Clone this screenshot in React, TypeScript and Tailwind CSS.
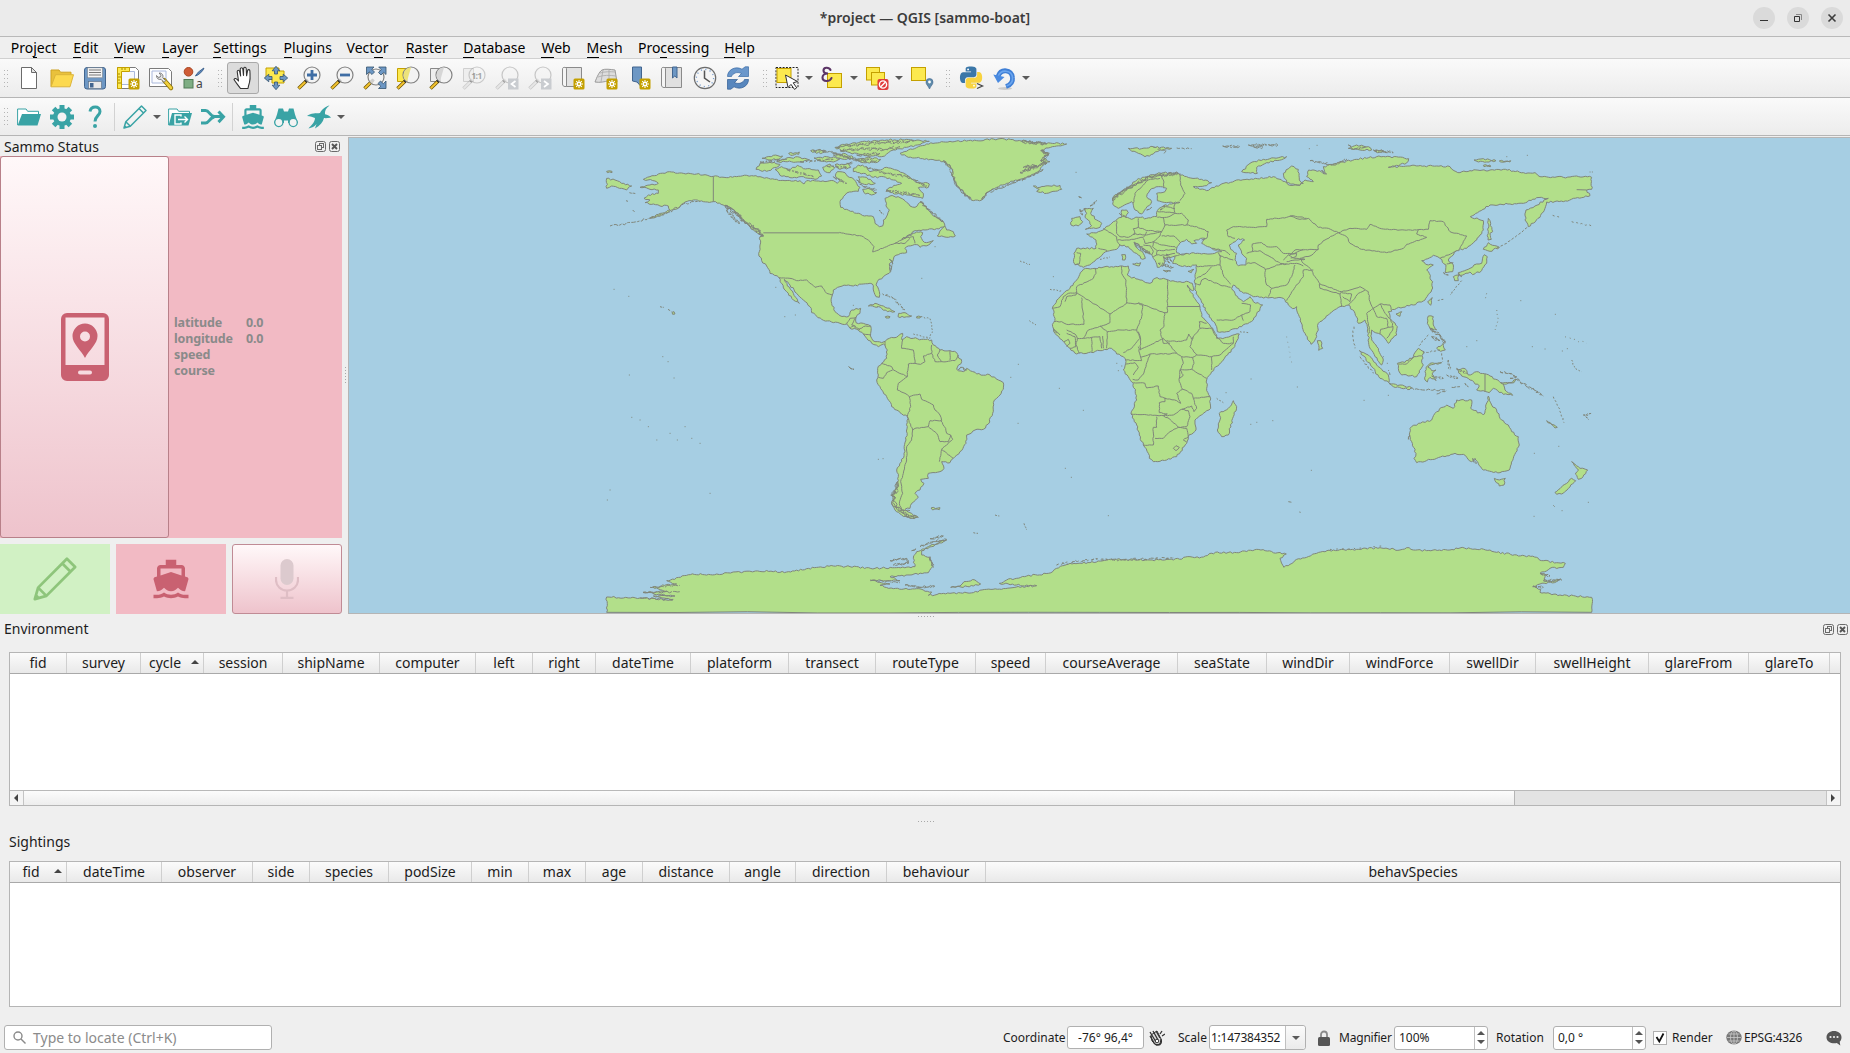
import React from "react";

/* ------------------------------------------------------------------ */
/* World map                                                           */
/* ------------------------------------------------------------------ */

type Part = [number, number, string];

const GREEN = "#b2df8a";
const LINE = "#80867a";

// Turns "x,y x,y ..." runs (each with its own origin) into one path and
// roughens long segments so that coastlines do not look straight.
function trace(parts: Part[], close = true, rough = 2.6, salt = 7): string {
  const pts: [number, number][] = [];
  for (const [dx, dy, run] of parts) {
    for (const p of run.trim().split(/\s+/)) {
      const [x, y] = p.split(",").map(Number);
      pts.push([x + dx, y + dy]);
    }
  }
  if (close) pts.push(pts[0]);
  let seed = salt + pts.length;
  const rnd = () => {
    seed = (seed * 1103515245 + 12345) % 2147483648;
    return seed / 2147483648 - 0.5;
  };
  let d = `M${pts[0][0]} ${pts[0][1]}`;
  for (let i = 1; i < pts.length; i++) {
    const [ax, ay] = pts[i - 1];
    const [bx, by] = pts[i];
    const len = Math.hypot(bx - ax, by - ay);
    const n = rough > 0 ? Math.min(14, Math.floor(len / 6)) : 0;
    for (let k = 1; k < n; k++) {
      const t = k / n;
      const j = rnd() * rough * 2;
      const nx = -(by - ay) / len;
      const ny = (bx - ax) / len;
      d += `L${(ax + (bx - ax) * t + nx * j).toFixed(1)} ${(ay + (by - ay) * t + ny * j).toFixed(1)}`;
    }
    d += `L${bx} ${by}`;
  }
  return close ? d + "Z" : d;
}

const NA = [0, 0] as const;
const SA = [750, 510] as const;
const AF = [1260, 0] as const;
const AS = [2070, 0] as const;
const OC = [2070, 570] as const;

const LAND: Part[][] = [
  // North America
  [[...NA, "130,148 150,140 175,132 215,126 245,129 290,132 340,139 385,143 410,140 440,136 455,137 480,140 500,143 530,148 555,152 600,152 612,162 620,152 650,153 700,152 712,160 722,150 706,138 712,125 735,128 748,142 762,148 770,160 780,172 775,184 748,186 730,200 720,215 722,232 740,238 770,250 800,257 820,260 825,280 838,290 848,288 850,270 862,255 868,240 858,228 855,205 870,198 900,203 915,212 930,228 945,232 965,215 985,240 1000,258 1030,275 1035,290 1010,296 975,300 945,302 920,318 905,328 950,306 968,308 962,320 968,332 980,338 1000,332 990,342 960,352 955,345 925,348 915,355 920,368 895,374 882,380 878,395 868,402 872,425 850,440 832,455 828,465 838,485 838,502 828,500 820,480 817,462 790,462 760,468 745,465 720,470 700,480 697,495 695,520 705,545 720,557 745,560 755,540 782,535 780,550 768,562 768,578 790,580 812,588 812,610 815,625 825,635 845,638 855,634 865,648 850,642 835,650 815,640 800,625 790,612 775,600 750,595 740,582 700,578 665,568 635,548 630,530 610,510 590,490 570,465 553,448 562,468 580,490 598,520 580,510 560,485 545,460 537,443 510,430 500,408 485,392 476,370 480,345 480,320 490,318 460,300 440,280 420,262 400,238 375,228 340,215 310,215 280,210 250,220 235,235 215,240 185,255 150,265 175,253 210,240 205,228 180,228 160,222 135,218 150,210 132,205 145,195 175,190 175,180 150,178 120,172 150,165 175,160 165,153"]],
  [[...NA, "20,145 45,150 65,160 95,168 80,180 65,175 35,168 20,175"]],
  [[...NA, "20,124 36,124 36,128 22,128"]],
  [[...NA, "1012,318 1022,300 1034,288 1040,300 1060,305 1066,318 1045,322"]],
  [[...NA, "468,118 480,100 510,97 540,103 530,112 500,124"]],
  [[...NA, "525,118 545,110 572,118 592,106 610,116 655,120 665,138 645,148 610,140 570,143 540,136"]],
  [[...NA, "486,85 520,76 548,78 540,86 510,90"]],
  [[...NA, "530,95 560,84 600,82 628,90 600,96"]],
  [[...NA, "566,70 598,66 596,73 572,76"]],
  [[...NA, "632,62 660,58 680,66 650,70"]],
  [[...NA, "642,84 680,80 720,86 700,96 660,93"]],
  [[...NA, "668,112 690,102 704,114 690,128 672,122"]],
  [[...NA, "705,104 745,100 752,112 720,118"]],
  [[...NA, "705,52 740,42 800,35 860,30 920,28 988,34 960,44 920,52 880,60 860,72 845,80 820,78 790,75 750,68 722,60"]],
  [[...NA, "765,90 800,82 842,88 832,97 790,98"]],
  [[...NA, "700,75 730,70 760,82 740,88 712,84"]],
  [[...NA, "760,115 775,105 800,110 810,125 835,120 860,112 890,120 920,135 945,155 988,162 985,172 955,173 970,190 968,205 945,200 920,195 890,192 858,184 870,172 905,160 880,150 850,140 820,142 790,130 760,125"]],
  [[...NA, "788,178 805,175 830,188 815,195 792,188"]],
  [[...NA, "775,140 800,142 826,160 800,164 780,158"]],
  // Greenland
  [[...NA, "900,70 925,60 980,42 1050,34 1130,32 1200,26 1290,34"], [...AF, "60,38 140,42 110,48 78,54 62,62 88,70 70,84 90,95 70,105 55,125 30,138 0,148"], [...NA, "1220,160 1190,172 1165,185 1145,210 1120,212 1100,196 1078,172 1062,150 1055,130 1058,118 1030,95 980,86 925,82"]],
  // Caribbean
  [[...NA, "805,528 825,520 850,528 885,545 862,545 835,530"]],
  [[...NA, "896,550 915,548 935,558 912,562 894,560"]],
  [[...NA, "856,560 870,560 868,564 858,564"]],
  [[...NA, "950,560 962,560 960,564 950,564"]],
  [[...NA, "216,547 222,545 225,552 218,553"]],
  // South America
  [[...SA, "105,125 118,115 145,108 158,100 156,120 170,110 190,115 215,118 245,120 250,135 270,150 300,152 320,158 335,185 320,208 340,215 350,205 380,222 420,225 445,240 460,248 460,268 445,290 430,308 428,340 415,372 400,388 375,390 350,405 348,430 330,455 310,475 300,488 275,485 282,505 270,515 235,520 235,535 212,538 222,550 210,570 195,580 205,592 185,610 180,625 165,628 185,640 205,652 180,655 155,645 135,630 125,605 130,580 140,560 145,530 140,510 155,485 162,460 168,420 172,380 172,350 150,338 125,320 110,290 90,260 80,240 85,225 83,205 95,190 110,175 112,150 105,130"]],
  [[...SA, "243,624 270,623 268,629 248,630"]],
  // Africa
  [[...AF, "190,418 225,415 255,410 300,408 325,408 328,420 322,435 330,440 360,450 390,460 405,445 430,445 445,450 480,455 505,455 517,460 522,480 517,482 502,465 520,500 540,530 545,560 565,580 580,600 590,615 590,625 620,622 658,612 655,625 640,655 610,690 575,725 560,750 560,775 570,800 572,835 545,855 525,870 528,900 505,920 500,940 470,980 440,990 400,995 388,985 385,970 370,945 358,915 350,885 333,852 350,810 340,760 325,740 310,720 318,695 310,680 290,672 275,655 240,662 205,668 170,672 150,655 130,635 105,610 98,590 105,565 97,535 120,500 145,480 170,450"]],
  [[...AF, "640,812 650,830 640,860 625,915 605,920 592,900 600,870 598,850 625,835"]],
  // Eurasia
  [[...AF, "800,158 790,130 815,108 835,118 838,150 850,160 832,166 800,158 760,140 700,148 650,150 600,165 560,182 520,170 560,167 575,158 545,148 500,140 470,130 430,128 390,135 350,150 320,175 280,200 278,222 295,235 320,222 335,215 345,240 365,252 378,235 395,215 380,200 390,180 415,170 440,175 435,185 410,190 412,212 440,218 480,217 455,222 430,228 412,242 410,260 380,265 355,262 335,268 316,262 325,248 320,240 305,240 305,262 280,275 255,295 235,305 200,312 228,330 228,355 170,355 162,370 162,400 190,412 215,400 235,385 250,370 290,358 300,345 325,350 355,375 368,388 376,385 370,370 345,345 342,336 355,342 370,358 392,372 400,385 412,412 430,408 432,388 465,378 458,400 500,410 530,405 525,440 525,460 525,480 560,545 590,590 592,605 620,605 665,590 700,570 728,525 700,515 690,500 670,515 655,505 635,475 640,465 665,485 700,500 750,503 790,505 805,525 818,536"],
   [...AS, "20,530 28,560 45,610 63,643 80,620 85,580 120,550 150,530 175,525 195,550 205,580 225,570 232,590 235,610 238,650 255,680 275,705 280,690 265,655 245,630 245,600 265,610 285,625 295,640 320,615 322,590 300,565 295,545 320,535 370,525 405,510 425,480 428,455 410,420 430,405 415,405 395,392 430,376 450,385 468,405 465,428 488,425 490,405 475,390 490,375 500,362 530,355 560,330 580,300 580,272 541,260 600,225 660,222 700,220 740,203 775,205 735,228 708,240 705,270 715,290 750,262 765,235 770,216 820,215 850,205 900,197 890,180 905,178 905,142 860,138 820,142 750,140 735,128 700,128 640,118 600,120 540,122 510,128 492,122 480,110 440,108 360,108 295,112 350,99 356,86 300,80 260,80 200,88 140,100 100,110 106,132 88,122 56,120 50,140 70,155 45,150 30,166 0,166"]],
  [[...AF, "195,235 220,235 212,250 230,270 245,280 240,292 196,298 215,287 205,270 195,262 200,250"]],
  [[...AF, "155,265 180,260 188,275 175,288 153,285"]],
  [[...AF, "40,168 60,172 90,168 120,166 125,178 80,190 50,184 58,178"]],
  [[...AF, "665,125 690,100 730,88 800,80 790,87 740,98 710,112 712,130"]],
  [[...AF, "325,55 365,56 400,50 455,55 420,60 400,72 375,80 355,70 335,64"]],
  [[...AF, "338,402 362,398 358,408"]],
  [[...AF, "305,374 316,374 315,390 307,390"]],
  [[...AF, "430,421 452,423 440,426"]],
  [[...AF, "504,424 522,418 514,428"]],
  [[...AS, "175,55 200,45 235,50 245,60 210,60"]],
  [[...AS, "252,62 275,60 290,68 262,68"]],
  [[...AS, "552,90 580,86 618,92 590,96 560,94"]],
  [[...AS, "628,93 662,92 660,96 632,96"]],
  [[...AS, "580,106 600,105 602,110 582,110"]],
  [[...AS, "82,632 92,632 98,655 86,661"]],
  [[...AS, "208,662 235,675 260,705 295,735 297,758 270,745 245,710"]],
  [[...AS, "297,760 330,765 365,773 360,778 310,770"]],
  [[...AS, "322,700 345,697 370,680 385,655 402,665 395,690 400,705 380,740 335,735 325,715"]],
  [[...AS, "455,698 425,704 414,712 425,722 438,720 426,732 438,752 420,742 412,756 405,750 408,712 420,700"]],
  [[...AS, "415,558 430,560 430,585 440,600 420,595 412,580"]],
  [[...AS, "440,655 460,640 466,660 452,664"]],
  [[...AS, "413,515 427,503 422,526"]],
  [[...AS, "318,552 335,545 330,559"]],
  [[...AS, "583,374 592,380 590,400 575,422 548,434 540,426 510,436 505,428 540,415 560,402 575,400"]],
  [[...AS, "580,358 595,338 628,352 600,364"]],
  [[...AS, "490,440 506,435 505,452 494,452"]],
  [[...AS, "595,265 602,280 608,305 600,310 604,328 594,330"]],
  [[...AS, "500,718 525,716 535,735 560,725 600,738 640,762 645,780 668,796 640,793 610,775 598,788 560,780 568,768 540,750 515,738"]],
  // Oceania
  [[...OC, "360,325 385,310 425,300 440,275 470,255 490,265 500,240 545,240 542,265 580,285 588,265 595,228 605,255 620,270 630,295 655,315 665,335 685,350 688,375 670,415 658,450 630,458 605,455 580,450 565,430 555,415 545,425 520,403 495,400 440,415 380,428 372,415 378,400 365,365 358,345"]],
  [[...OC, "613,475 628,480 646,475 642,495 628,498"]],
  [[...OC, "845,425 870,445 893,450 875,475 865,478 856,462 866,450"]],
  [[...OC, "795,517 830,490 845,475 857,482 835,505 815,522 800,523"]],
  [[...OC, "632,188 660,188 678,178 672,188 650,192"]],
  [[...OC, "770,302 802,322 795,324"]],
];

const LAKES: Part[][] = [
  [[...AF, "470,368 470,355 485,335 500,328 515,342 530,340 522,332 555,325 545,340 575,355 605,365 570,372 520,368 490,375"]],
  [[...AF, "628,345 655,326 674,330 655,345 665,370 680,385 678,405 655,407 645,390 650,370 632,358"]],
];

const ANTARCTICA: Part[] = [
  [0, 0, "20,1447 20,1401 120,1404 218,1410 160,1398 225,1398 129,1387 200,1384 158,1371 230,1362 200,1352 271,1334 350,1332 466,1323 560,1326 643,1313 700,1308 750,1310"],
  [...SA, "75,805 140,803 195,800 190,775 200,755 235,740 290,720 245,740 215,752 215,765 238,772 248,800 235,818 180,825 120,830 150,842 62,842 120,852 90,856 130,866 200,866 245,876 235,886 300,880 370,878 410,868 480,864 560,857 500,855 448,850 470,840 530,828 595,820 620,805 660,790 720,788 800,778 900,780 970,780 1020,770 1048,774"],
  [0, 0, "1846,1267 1910,1268 1970,1258 2059,1272 2040,1285 2052,1312"],
  [...OC, "0,733 20,718 50,712 80,700 130,690 200,688 270,683 330,690 350,683 370,690 410,692 480,690 510,684 600,690 620,697 680,705 740,712 755,722 826,730 820,742 780,745 750,760 765,762 762,778 775,785 812,777 800,785 750,792 728,800 752,808 750,817 810,825 905,832 905,877"],
];

const BORDERS: Part[] = [
  [...NA, "718,307 750,313 785,318 810,335 822,350 818,366 860,350 885,340 905,330 922,322 940,320 945,340"],
  [...NA, "885,340 915,340 930,325"],
  [...NA, "537,443 570,445 590,452 620,450 645,472 665,468 680,490 697,495"],
  [...NA, "740,582 750,565 768,562 755,585 768,590"],
  [...NA, "775,600 790,590 812,588"],
  [...NA, "750,595 760,588 780,600"],
  [...NA, "790,612 812,615"],
  [...SA, "158,120 155,145 190,150 195,190 175,192 172,230 145,250 142,270 165,280 178,290 210,282 215,298 250,315 255,330 270,345 275,362 240,362 235,380 195,385 188,390"],
  [...SA, "95,190 125,200 130,210 172,230"],
  [...SA, "85,232 100,235 110,218 128,210"],
  [...SA, "178,290 182,320 172,350 188,390 185,420 170,440 170,480 160,520 152,545 158,580 148,610 155,630 180,632"],
  [...SA, "235,380 260,400 270,425 295,425 302,405 290,400 287,385 272,362"],
  [...SA, "302,405 308,418 275,448 310,475"],
  [...SA, "275,448 268,485"],
  [...SA, "195,190 212,193 225,185 220,168 245,160 245,135"],
  [...SA, "270,150 262,165 275,185 315,182 325,165"],
  [...SA, "245,160 255,185 275,185"],
  [...SA, "300,152 300,180"],
  [...AF, "225,415 228,430 220,445 170,470 170,488 145,490 130,500 120,530 97,535"],
  [...AF, "170,488 270,552 320,520 318,450 305,430 305,408"],
  [...AF, "185,503 192,583 140,583 125,575 102,575"],
  [...AF, "170,488 168,495 140,500 135,515"],
  [...AF, "270,552 270,578 245,588 205,600 190,625 172,625 165,612 140,600"],
  [...AF, "320,518 345,522 355,520 368,525 365,560 350,600"],
  [...AF, "355,518 432,548 442,548 443,450"],
  [...AF, "434,548 432,590 420,600 430,640 450,640"],
  [...AF, "240,588 262,605 300,600 350,600 360,625 335,655 310,668"],
  [...AF, "262,605 260,655"],
  [...AF, "248,618 250,655"],
  [...AF, "190,625 215,622 240,620 245,655"],
  [...AF, "215,622 216,665"],
  [...AF, "172,625 168,645 178,670"],
  [...AF, "132,635 145,628 150,640 140,650"],
  [...AF, "140,610 165,620 168,650 150,655"],
  [...AF, "355,605 362,630 360,660 380,650 430,625 445,640 470,670 430,672 390,672 362,682 355,650"],
  [...AF, "440,632 470,635 500,630 506,612 515,628 540,595 575,595 582,610 590,620 610,640 640,640 600,675 575,680 530,675 510,650 520,622"],
  [...AF, "540,595 538,575 560,580"],
  [...AF, "640,640 640,620"],
  [...AF, "470,670 485,680 518,682 530,675"],
  [...AF, "518,682 522,700 515,718 560,745"],
  [...AF, "575,680 575,720"],
  [...AF, "485,680 490,700 480,720 515,718"],
  [...AF, "480,720 490,735 478,745"],
  [...AF, "480,720 478,755 488,778 515,790 520,805 570,800"],
  [...AF, "390,672 378,710 368,735 355,750 338,748"],
  [...AF, "340,758 375,760 380,774 415,768 420,800 435,805 470,812 482,820 470,790 488,778"],
  [...AF, "333,852 360,854 430,857 442,852 418,848 418,818 435,815 435,803"],
  [...AF, "430,857 460,855 485,838 515,828 522,845 530,835 520,805"],
  [...AF, "485,838 505,842 510,860 500,890 475,892 450,868 430,857"],
  [...AF, "410,860 410,892 400,892 400,945 370,945"],
  [...AF, "405,925 430,925 450,905 475,892 500,895 505,920 490,930 500,936"],
  [...AF, "460,955 468,947 478,952 468,962 460,955"],
  [...AF, "318,690 365,692 362,682"],
  [...AF, "318,702 345,698 355,712 340,735"],
  [...AF, "170,368 182,370 178,402 164,404"],
  [...AF, "235,355 262,362"],
  [...AF, "250,295 290,320 292,335 300,345"],
  [...AF, "290,272 290,310 300,320 325,322 345,312 340,296 355,292"],
  [...AF, "355,265 355,292 385,302 425,305 435,285 430,262"],
  [...AF, "292,330 320,330 335,328 370,322 380,305"],
  [...AF, "340,312 380,315 425,305"],
  [...AF, "370,325 375,340 400,335 420,318 425,305"],
  [...AF, "400,335 425,345 465,350 470,355"],
  [...AF, "425,318 462,318 480,335"],
  [...AF, "435,285 500,285 505,270 485,250 465,250"],
  [...AF, "412,262 440,262 465,250 462,235 465,222"],
  [...AF, "412,245 462,248"],
  [...AF, "430,228 465,236"],
  [...AF, "500,285 530,290 565,305 560,325 545,330"],
  [...AF, "420,130 430,150 432,175"],
  [...AF, "480,130 482,165 495,190 480,212"],
  [...AF, "420,145 385,150 365,170 345,190 340,220"],
  [...AF, "370,345 392,348 400,365 395,375"],
  [...AF, "400,335 398,350 412,362 410,375 400,380"],
  [...AF, "412,362 425,362 465,358"],
  [...AF, "410,375 435,376 465,370"],
  [...AF, "465,378 500,370"],
  [...AF, "575,355 615,362 630,375"],
  [...AF, "595,368 600,378 640,390"],
  [...AF, "530,410 560,408 600,405 600,375"],
  [...AF, "600,405 612,440 632,462"],
  [...AF, "530,445 555,432 575,410"],
  [...AF, "525,460 540,465 545,450 555,445 600,465 632,472"],
  [...AF, "590,570 640,570 665,555 670,572"],
  [...AF, "665,555 690,545 692,525 665,520"],
  [...AF, "620,300 640,290 700,292 740,290 740,268 800,262 820,257 860,265"],
  [...AF, "620,300 625,320 645,325"],
  [...AF, "680,370 697,365 697,342 725,338 740,350 770,350 790,370 820,372 850,358"],
  [...AF, "697,365 720,362 750,380 780,400 800,402"],
  [...AF, "680,400 705,398 735,415 735,440 740,465 755,475 745,500"],
  [...AF, "735,420 770,405 800,402 830,400 850,408"],
  [...AF, "755,475 800,465 815,440 825,405"],
  [...AF, "800,512 815,485 850,440 850,420 880,420"],
  [...AF, "790,390 805,375 825,385 855,388 825,390 800,395"],
  [...AF, "805,372 830,370 828,380 812,384"],
  [...AS, "0,258 30,268 55,265 85,292 115,295 145,308 180,295 230,298 240,283 280,297 330,300 380,300 415,298 420,272 460,275 480,305 530,318 515,345 505,360"],
  [...AS, "145,308 170,320 180,340 215,358 290,368 340,355 350,343 410,322 380,312 385,300"],
  [...AS, "145,308 105,330 85,345 85,358 15,360 0,375"],
  [...AS, "85,358 60,378 30,385 40,400 60,415 75,440 90,462 155,485 180,480 210,470 235,485 240,515 250,535 270,522 300,525 305,545"],
  [...AS, "88,462 90,475 150,492 155,485"],
  [...AS, "150,492 155,530"],
  [...AS, "155,488 185,492 180,515 158,500"],
  [...AS, "175,525 190,510 205,490 225,480"],
  [...AS, "250,535 230,550 235,580 240,610"],
  [...AS, "250,535 260,560 290,565 295,592 272,598 270,612"],
  [...AS, "270,522 290,555 308,580 308,600 290,625"],
  [...AS, "295,592 310,590"],
  [...AS, "450,385 475,375 500,362"],
  [...AS, "470,402 490,398"],
  [...AS, "325,702 350,702 372,680 395,678"],
];

// Dense fjord coasts and archipelagos: s is the spread of the scribble
// around the line, dash breaks it into separate islets.
const FJORDS: { d: string; s: number; dash: string }[] = [
  { d: "M375 226L405 248L432 272L468 296L490 318", s: 7, dash: "30 2" },
  { d: "M380 240L418 282", s: 5, dash: "9 3" },
  { d: "M30 288L60 285L100 277L150 264L200 250L250 222L300 213", s: 3, dash: "8 4 14 3" },
  { d: "M98 240L104 246M78 212L84 214M88 188L108 191", s: 2, dash: "8 2" },
  { d: "M882 1082L880 1110L888 1132L910 1150L950 1162", s: 9, dash: "40 2" },
  { d: "M893 1055L888 1090", s: 7, dash: "30 2" },
  { d: "M1538 212L1545 200L1600 165L1650 140L1735 130", s: 6, dash: "30 2" },
  { d: "M710 52L760 45L850 38L940 34M720 62L800 55L850 60L900 50M770 75L840 70M740 100L760 96M700 70L770 88L830 92", s: 5, dash: "18 4 9 3" },
  { d: "M640 62L690 64L760 90L800 96M600 95L700 88M480 96L560 88M680 108L740 112M560 118L640 140", s: 3.5, dash: "12 6 5 5" },
  { d: "M800 112L860 130L920 140L980 168M860 180L960 196M770 150L790 170L830 180M700 140L740 160", s: 4, dash: "14 4 6 3" },
  { d: "M960 215L985 238L1030 275", s: 4, dash: "12 3" },
  { d: "M838 240L850 252", s: 4, dash: "5 3" },
  { d: "M1030 92L1052 112L1062 150L1080 178L1110 208", s: 5, dash: "20 2" },
  { d: "M1145 208L1165 186L1230 162L1290 140L1330 118", s: 4, dash: "14 5" },
  { d: "M1325 60L1345 75L1322 92L1340 100L1260 128M1310 108L1270 112M1265 34L1340 42", s: 6, dash: "20 3" },
  { d: "M848 492L880 505L905 530L915 540", s: 4, dash: "4 6 7 4" },
  { d: "M962 560L990 566L997 600L990 625L940 612", s: 2, dash: "5 5" },
  { d: "M868 388L878 400L870 425", s: 5, dash: "20 3" },
  { d: "M180 530L192 532M204 538L214 544", s: 2, dash: "7 3" },
  { d: "M746 710L762 718", s: 5, dash: "12 2" },
  { d: "M1075 720L1082 712L1100 720", s: 5, dash: "14 2" },
  { d: "M1605 340L1650 372", s: 6, dash: "14 2" },
  { d: "M1675 400L1720 412M1690 380L1710 400M1700 372L1715 395", s: 6, dash: "7 4" },
  { d: "M1868 48L1920 50M1945 45L2000 45M1960 50L1990 52M2005 44L2035 45", s: 4, dash: "20 3 8 3" },
  { d: "M1730 54L1775 56M1660 52L1700 62L1690 74", s: 3, dash: "10 5" },
  { d: "M1440 245L1455 235M1470 228L1490 212M1436 200L1446 204M1440 238L1448 255", s: 4, dash: "9 3" },
  { d: "M1500 388L1530 380M1350 478L1385 482M1288 572L1308 585M1260 393L1290 403", s: 3, dash: "5 5" },
  { d: "M1558 250L1580 262M1640 240L1655 232M1680 240L1695 226", s: 4, dash: "9 3" },
  { d: "M1360 595L1380 615", s: 4, dash: "20 2" },
  { d: "M1850 805L1870 818M1920 605L1945 608", s: 3, dash: "5 5" },
  { d: "M2245 45L2260 58L2300 50M2320 60L2380 68M2130 92L2200 105L2240 88M2165 120L2180 132", s: 4, dash: "12 4 5 3" },
  { d: "M2690 354L2720 340L2760 310L2785 290", s: 1.5, dash: "8 5" },
  { d: "M2858 256L2880 262M2915 275L2975 288", s: 2, dash: "6 8" },
  { d: "M2585 452L2550 495M2530 508L2510 512", s: 1.5, dash: "6 5" },
  { d: "M2262 590L2258 615L2265 655", s: 2, dash: "7 6" },
  { d: "M2280 680L2320 730M2370 735L2365 720", s: 3, dash: "8 5" },
  { d: "M2430 775L2480 780L2535 780M2510 792L2540 780M2555 772L2580 770", s: 3, dash: "14 3" },
  { d: "M2490 595L2520 615L2535 640M2495 620L2520 632", s: 6, dash: "9 3" },
  { d: "M2485 615L2455 650M2520 660L2470 670M2525 670L2528 695", s: 2, dash: "7 5" },
  { d: "M2545 690L2550 720M2540 735L2575 745M2495 738L2530 745M2595 760L2605 770M2570 715L2600 730", s: 4, dash: "7 4" },
  { d: "M2700 725L2740 735L2760 755L2830 798M2730 745L2750 740", s: 4, dash: "10 5" },
  { d: "M2860 800L2870 820L2880 845L2892 878", s: 3, dash: "6 6" },
  { d: "M2950 855L2975 850M2958 860L2965 868", s: 4, dash: "6 3" },
  { d: "M2690 540L2695 570L2685 600M2660 490L2655 510", s: 1, dash: "3 9" },
  { d: "M2915 690L2925 715L2945 725", s: 2, dash: "5 5" },
  { d: "M2895 620L2960 640", s: 3, dash: "3 12" },
  { d: "M2060 620L2075 700", s: 2, dash: "2 14" },
  { d: "M2530 428L2545 435M2575 430L2585 440", s: 5, dash: "8 3" },
  { d: "M2618 985L2630 1000", s: 5, dash: "14 2" },
  { d: "M2430 915L2425 930", s: 4, dash: "14 2" },
  { d: "M1185 1155L1198 1158M1120 1208L1134 1210M1272 1180L1280 1200", s: 2, dash: "6 4" },
  { d: "M990 1226L1030 1218M960 1250L1000 1235L1040 1228M935 1262L950 1255M990 1280L1000 1312", s: 4, dash: "14 3" },
  { d: "M870 1292L920 1285L925 1300L880 1305M915 1365L960 1372L1005 1368", s: 4, dash: "16 3" },
  { d: "M1370 1305L1420 1295L1480 1288L1560 1290L1720 1284", s: 4, dash: "6 12 9 6" },
  { d: "M120 1404L220 1408M130 1388L240 1385M150 1372L240 1366M810 1350L900 1358", s: 3, dash: "20 4" },
  { d: "M2800 1368L2830 1372M2820 1330L2850 1338M2830 1352L2885 1350", s: 4, dash: "12 3" },
  { d: "M2190 1258L2300 1255M2320 1250L2345 1248", s: 3, dash: "5 14" },
  { d: "M2065 1115L2076 1117M2098 1146L2102 1147M2860 1126L2864 1130", s: 3, dash: "8 2" },
];

const scribble = (d: string, spread: number, salt: number) =>
  d
    .split("M")
    .filter(Boolean)
    .map((run) => trace([[0, 0, run.split("L").map((p) => p.trim().replace(" ", ",")).join(" ")]], false, spread, salt))
    .join("");

const SPECKS: [number, number][] = [
  [965, 445], [527, 472], [586, 555], [554, 560], [760, 526], [188, 680], [204, 695], [222, 744], [88, 735], [42, 478], [86, 499], [832, 530], [1005, 350],
  [1255, 703], [1232, 742], [1378, 775], [1450, 841], [1254, 880], [1396, 1015], [1414, 1042], [1525, 1157], [835, 988], [849, 986], [1428, 127], [1440, 202], [1360, 440],
  [1953, 747], [1970, 877], [1952, 883], [2018, 872], [2092, 771], [2134, 1021], [1878, 788], [2128, 56], [2151, 46], [2782, 76], [2720, 80],
  [2630, 632], [2600, 650], [2797, 650], [2835, 657], [2902, 656], [2887, 663], [2866, 553], [2762, 512], [2803, 970], [2876, 949], [2886, 1142], [2802, 1159],
  [2965, 1117], [2292, 811], [2365, 796], [2970, 126], [2977, 126], [1565, 708], [1555, 722], [1550, 700], [120, 870], [145, 890], [210, 910], [232, 930], [255, 890],
  [275, 925], [300, 940], [170, 930], [95, 862], [30, 1080], [22, 1110], [330, 1090], [2350, 680], [2362, 700],
];

function WorldMap() {
  return (
    <svg className="block h-full w-full" viewBox="349 138 1501 475" preserveAspectRatio="none">
      <g transform="translate(600 130) scale(0.33333)" stroke={LINE} strokeWidth="3" strokeLinejoin="round" fill={GREEN}>
        <path d={trace(ANTARCTICA)} />
        <path d={trace([[0, 0, "1052,1372 1080,1368 1092,1355 1125,1350 1142,1362 1120,1368"]])} />
        {LAND.map((parts, i) => (
          <path key={i} d={trace(parts)} />
        ))}
        {LAKES.map((parts, i) => (
          <path key={i} d={trace(parts)} fill="#a6cee3" />
        ))}
        <g fill="none">
          <path d="M490 308.500H718M340 139V215M1703 529.500H1800M2655 732V785M2930 179L2960 180" />
          {BORDERS.map((part, i) => (
            <path key={i} d={trace([part], false, 1.4)} />
          ))}
          {FJORDS.map((f, i) => (
            <g key={i} strokeWidth="3" strokeDasharray={f.dash}>
              <path d={scribble(f.d, f.s, 11)} />
              {f.s > 3 && <path d={scribble(f.d, f.s, 523)} />}
              {f.s > 5 && <path d={scribble(f.d, f.s, 3301)} />}
            </g>
          ))}
        </g>
        {SPECKS.map(([x, y], i) => (
          <rect key={i} x={x - 1.5} y={y - 1.5} width="3.5" height="3" fill={LINE} stroke="none" opacity="0.8" />
        ))}
      </g>
    </svg>
  );
}

/* ------------------------------------------------------------------ */
/* Icons                                                               */
/* ------------------------------------------------------------------ */

const TEAL = "#39a3a5";

function Svg({ children, className = "size-6" }: { children: React.ReactNode; className?: string }) {
  return (
    <svg viewBox="0 0 24 24" className={`block shrink-0 overflow-visible ${className}`} fill="none">
      {children}
    </svg>
  );
}

const Burst = ({ x = 12.5, y = 12.5 }: { x?: number; y?: number }) => (
  <g transform={`translate(${x} ${y})`}>
    <rect width="11" height="11" rx="1.5" fill="#c4a000" />
    <path d="M5.5 1.500v8M1.500 5.500h8M2.700 2.700l5.600 5.600M8.300 2.700L2.700 8.300" stroke="#fff" strokeWidth="1.100" />
    <circle cx="5.500" cy="5.500" r="2.200" fill="#fff" />
    <circle cx="5.500" cy="5.500" r="1" fill="#c4a000" />
  </g>
);

const NewIcon = () => (
  <Svg>
    <path d="M4.500 1.500h10l5 5v16h-15z" fill="#fff" stroke="#6b6b6b" />
    <path d="M14.500 1.500v5h5z" fill="#e4e4e4" stroke="#6b6b6b" strokeLinejoin="round" />
  </Svg>
);
const OpenIcon = () => (
  <Svg>
    <path d="M1 20.500V4h8l1.500 2.200H21v3" fill="#e9c13c" stroke="#cfa322" />
    <path d="M1 20.800L5.500 8.700h18L20 20.800z" fill="#fcd94f" stroke="#dcb43a" />
  </Svg>
);
const SaveIcon = () => (
  <Svg>
    <rect x="1.500" y="1.500" width="21" height="21.500" rx="2.500" fill="#6d97c4" stroke="#41658f" />
    <rect x="4.500" y="1.800" width="15" height="10" fill="#f4f4f4" stroke="#77808a" strokeWidth=".6" />
    <path d="M6 4h12M6 6.500h12M6 9h12" stroke="#777" />
    <rect x="5.500" y="15.500" width="13" height="7" fill="#e8e8e8" stroke="#586b80" strokeWidth=".6" />
    <rect x="7" y="17" width="3.500" height="4.500" fill="#41658f" />
  </Svg>
);
const LayoutIcon = () => (
  <Svg>
    <path d="M1.500 1.500h18l3 3v18h-21z" fill="#fff" stroke="#7b7b7b" />
    <path d="M5.500 5.500h13v13h-13z" fill="#f6f8fc" stroke="#a9b8dc" />
    <path d="M1.500 1.500h12v4h-8v17h-4z" fill="#fce94f" stroke="#c4a000" />
    <path d="M2 8h2M2 11h3M2 14h2M2 17h3M6 2v2M9 2v2" stroke="#a68800" />
    <Burst />
  </Svg>
);
const LayoutManagerIcon = () => (
  <Svg>
    <path d="M.5 2.500h19l3 3v15H.5z" fill="#fff" stroke="#7b7b7b" />
    <path d="M3 5h14v12H3z" stroke="#a9b8dc" fill="#fafbfe" />
    <path d="M15 14l7 8" stroke="#8a6f00" strokeWidth="4.400" strokeLinecap="round" />
    <path d="M15 14l7 8" stroke="#f0cf3c" strokeWidth="2.800" strokeLinecap="round" />
    <path d="M7.500 9.500c0 3 2 4.500 4.500 3.800l3 3 1.600-1.600-2.800-3c.8-2.500-1-5-3.600-4.700l1.700 2.300-.8 1.800-2 .2z" fill="#e6e6e6" stroke="#666" strokeWidth=".8" />
  </Svg>
);
const StyleIcon = () => (
  <Svg>
    <circle cx="6.500" cy="5.800" r="4.300" fill="#cf5c36" stroke="#a8431f" />
    <path d="M13.500 10c1-3 6-6.500 8.500-8-1 3-5 7-8.500 8z" fill="#5b88bd" stroke="#41658f" />
    <rect x="2" y="13.500" width="9" height="8.500" fill="#7fae84" stroke="#507a56" />
    <text x="14" y="22" fontSize="12" fill="#444" fontFamily="Noto Sans">a</text>
  </Svg>
);
const HandIcon = () => (
  <Svg>
    <path d="M9.500 22.500c-2-3-5.500-7-6.500-9 .8-1.800 2.500-1.200 4.500 1.500L6.200 5.500c.3-1.700 2-1.600 2.400 0l1 4.500-.4-7c.4-1.600 2.200-1.600 2.600 0l.7 6.500.2-7.200c.4-1.500 2.200-1.400 2.500.2l.4 7.300 1-5.300c.6-1.400 2.100-1.100 2.300.4 0 3 .8 7-.4 11.500-.6 2-1.200 4-1.500 6.100z" fill="#fff" stroke="#333" strokeWidth="1.100" strokeLinejoin="round" />
  </Svg>
);
const PanToIcon = () => (
  <Svg>
    <path d="M2 2h13v3h5v12H8v-4H2z" fill="#fce94f" stroke="#c4a000" />
    <path d="M12 .3l3.800 4.500h-2.300V8h-3V4.800H8.200zM12 23.700l3.800-4.500h-2.300V16h-3v3.200H8.200zM.3 12l4.500-3.800v2.300H8v3H4.800v2.300zM23.700 12l-4.500-3.800v2.300H16v3h3.200v2.300z" fill="#6d97c4" stroke="#34536f" strokeWidth=".8" />
  </Svg>
);
const Lens = ({ cx = 15, cy = 9, children, faded = false }: { cx?: number; cy?: number; children?: React.ReactNode; faded?: boolean }) => (
  <g opacity={faded ? 0.4 : 1}>
    <path d="M9.800 14.500L1.500 22.500" stroke={faded ? "#8a8a8a" : "#6b5400"} strokeWidth="3.400" />
    <path d="M9 15.300L1.800 22.200" stroke={faded ? "#d8d8d8" : "#f4c430"} strokeWidth="1.900" />
    <path d="M10.700 13.500L8.300 15.800" stroke="#222" strokeWidth="3" />
    <circle cx={cx} cy={cy} r="8" fill="#f3f3f3" fillOpacity=".82" stroke="#828282" strokeWidth="1.200" />
    {children}
  </g>
);
const ZoomInIcon = () => <Svg><Lens><path d="M15 4v10M10 9h10" stroke="#3f6ea5" strokeWidth="2.800" /></Lens></Svg>;
const ZoomOutIcon = () => <Svg><Lens><path d="M10 9h10" stroke="#3f6ea5" strokeWidth="2.800" /></Lens></Svg>;
const ZoomFullIcon = () => (
  <Svg>
    <Lens cx={13} cy={11} />
    <path d="M3.500 1h7.500L8.800 3.300l2.700 2.700-2.500 2.500-2.800-2.700L3.500 8.500zM23 1v7.500l-2.300-2.200L18 9l-2.500-2.500L18.200 3.600 15.700 1zM23 22.500h-7.500l2.300-2.300-2.800-2.700L17.500 15l2.800 2.700L23 15z" fill="#6d97c4" stroke="#34536f" strokeWidth=".8" />
  </Svg>
);
const ZoomSelectionIcon = () => <Svg><path d="M1.500 2.500h10v13h-10z" fill="#fce94f" stroke="#c4a000" /><Lens><path d="M15 1.500A7.500 7.500 0 0 0 11 15.300z" fill="#ece27a" /></Lens></Svg>;
const ZoomLayerIcon = () => <Svg><path d="M1.500 2.500h10v13h-10z" fill="#eee" stroke="#888" /><Lens><path d="M15 1.500A7.500 7.500 0 0 0 11 15.300z" fill="#d6d6d6" /></Lens></Svg>;
const ZoomNativeIcon = () => (
  <Svg><g opacity=".9"><path d="M1.500 2.500h10v13h-10z" fill="#eee" stroke="#ccc" /><Lens faded><text x="9.300" y="12.500" fontSize="9" fontWeight="700" fill="#222" fontFamily="Noto Sans" textLength="11">1:1</text></Lens></g></Svg>
);
const ZoomStepIcon = ({ next = false }: { next?: boolean }) => (
  <Svg>
    <Lens faded />
    <rect x="13" y="12.500" width="10.500" height="11" fill="#c9ccd0" />
    <path d={next ? "M16 15l4 3-4 3" : "M20.500 15l-4 3 4 3"} stroke="#fff" strokeWidth="1.700" />
  </Svg>
);
const MapViewIcon = () => (
  <Svg><path d="M3.500 1.500h17v19h-15a2.500 2.500 0 0 1-2.500-2.500V2z" fill="#e2e2e2" stroke="#8a8a8a" /><path d="M1.500 18V2.500C1.500 1 5.500 1 5.500 2.500V20.500H4c-1.500 0-2.500-1-2.500-2.500z" fill="#f5f5f5" stroke="#8a8a8a" /><Burst /></Svg>
);
const View3DIcon = () => (
  <Svg><path d="M1 16c2-5 4-10 7-12 3-1.500 9-.5 13 0l2 12c-3-2-6-1.500-9-1s-8 2-13 1z" fill="#ddd" stroke="#999" /><path d="M4 11c5-2 12-2 18-1M6 7c5-1.500 10-1.500 15-1M9 4L7 16M15 4v11" stroke="#aaa" strokeWidth=".8" /><Burst /></Svg>
);
const NewBookmarkIcon = () => (
  <Svg><path d="M5.500 1h9v20l-4.500-5-4.500-1z" fill="#6d97c4" stroke="#41658f" /><Burst /></Svg>
);
const BookmarksIcon = () => (
  <Svg><path d="M3.500 1.500h18v20h-16a2.500 2.500 0 0 1-2.500-2.500V2z" fill="#e0e0e0" stroke="#8a8a8a" /><path d="M1.500 19V2.500C1.500 1 5.500 1 5.500 2.500V21.500H4c-1.500 0-2.500-1-2.500-2.500z" fill="#f5f5f5" stroke="#8a8a8a" /><path d="M12.500 1h4.500v11l-2.200-2-2.300 2z" fill="#6d97c4" stroke="#41658f" /></Svg>
);
const ClockIcon = () => (
  <Svg><circle cx="12" cy="12" r="10.700" fill="#f5f5f5" stroke="#6c6c6c" strokeWidth="1.200" /><circle cx="12" cy="12" r="8.600" stroke="#7ba0cf" strokeWidth="1.300" strokeDasharray="1.200 3.300" /><path d="M11.500 4.500V12l5.500 4" stroke="#555" strokeWidth="1.500" /></Svg>
);
const RefreshIcon = () => (
  <Svg>
    <path d="M1.500 10.500C1.500 4 9-.5 16 3.200l3.200-2.400h3.300v9.700h-10l3-3C11 5.200 6.500 7.500 5.500 10.500z" fill="#6a97cb" stroke="#3a6aa5" strokeWidth=".7" />
    <path d="M22.500 13.500C22.500 20 15 24.500 8 20.800l-3.200 2.400H1.500v-9.700h10l-3 3c4.500 2.300 9 0 10-3z" fill="#5786bd" stroke="#2f5b93" strokeWidth=".7" />
  </Svg>
);
const SelectIcon = () => (
  <Svg>
    <rect x="1" y="1.500" width="22" height="20" stroke="#222" strokeDasharray="2 1.300" />
    <rect x="2" y="2.500" width="14" height="14" fill="#fce94f" stroke="#c4a000" />
    <path d="M10.500 9l12 6.500-4.300 1.300 3.500 5-2.200 1.600-3.500-5-3 3z" fill="#fff" stroke="#333" />
  </Svg>
);
const SelectValueIcon = () => (
  <Svg>
    <rect x="7.500" y="7.500" width="14" height="14" fill="#fce94f" stroke="#c4a000" />
    <path d="M10.500 4C9 .8 3.500 1 3.500 4.500c0 2 1.800 3 4.500 3-3.500 0-5.500 1.300-5.500 4 0 4.500 7.500 4.500 9 .5" stroke="#5c3566" strokeWidth="2.100" strokeLinecap="round" />
  </Svg>
);
const DeselectIcon = () => (
  <Svg>
    <rect x="1.500" y="1.500" width="13" height="12.500" fill="#fce94f" stroke="#c4a000" />
    <rect x="6.500" y="6.500" width="13" height="12.500" fill="#fce94f" stroke="#c4a000" />
    <rect x="12.500" y="13" width="11" height="11" rx="2" fill="#e03c3c" />
    <circle cx="18" cy="18.500" r="3.600" stroke="#fff" strokeWidth="1.400" /><path d="M15.500 21l5-5" stroke="#fff" strokeWidth="1.400" />
  </Svg>
);
const LocationIcon = () => (
  <Svg>
    <rect x="1.500" y="1.500" width="14" height="13" fill="#fce94f" stroke="#c4a000" />
    <path d="M19.500 23c-1.500-3.500-3.500-4.500-3.500-7a3.500 3.500 0 0 1 7 0c0 2.500-2 3.500-3.500 7z" fill="#5f8cab" stroke="#41658f" strokeWidth=".6" /><circle cx="19.500" cy="16" r="1.400" fill="#fff" />
  </Svg>
);
const PY =
  "M14.250.18l.9.2.73.26.59.3.45.32.34.34.25.34.16.33.1.3.04.26.02.2-.01.13V8.500l-.05.63-.13.55-.21.46-.26.38-.3.31-.33.25-.35.19-.35.14-.33.1-.3.07-.26.04-.21.02H8.770l-.69.05-.59.14-.5.22-.41.27-.33.32-.27.35-.2.36-.15.37-.1.35-.07.32-.04.27-.02.21v3.060H3.170l-.21-.03-.28-.07-.32-.12-.35-.18-.36-.26-.36-.36-.35-.46-.32-.59-.28-.73-.21-.88-.14-1.050-.05-1.230.06-1.220.16-1.040.24-.87.32-.71.36-.57.4-.44.42-.33.42-.24.4-.16.36-.1.32-.05.24-.01h.16l.06.01h8.160v-.83H6.180l-.01-2.750-.02-.37.05-.34.11-.31.17-.28.25-.26.31-.23.38-.2.44-.18.51-.15.58-.12.64-.1.71-.06.77-.04.84-.02 1.270.05z";
const PythonIcon = () => (
  <Svg>
    <g transform="translate(0 .5) scale(.92)">
      <path d={PY} fill="#3b77a8" /><circle cx="8.800" cy="3.200" r="1" fill="#fff" />
      <path d={PY} fill="#f8d33f" transform="rotate(180 12 12)" /><circle cx="15.200" cy="20.800" r="1" fill="#fff" />
    </g>
    <path d="M17 17.500l5.500 2.500-5.500 2.500" stroke="#444" strokeWidth="1.300" />
  </Svg>
);
const UndoIcon = () => (
  <Svg>
    <ellipse cx="12" cy="22.500" rx="7" ry="1.500" fill="#000" opacity=".15" />
    <path d="M13 20.500c4.500-1.500 7-4.500 6.500-9C18.800 3.500 8 2 5 10.500" stroke="#3f7fd6" strokeWidth="4.800" />
    <path d="M13.500 20c4.500-1.500 6.500-4.500 6-8.500C18.800 4 8 2.500 5 10.500" stroke="#6aa5ee" strokeWidth="1.600" />
    <path d="M.3 8.500l11.200 2.500-6.500 6z" fill="#4a8ae0" />
  </Svg>
);

const BOAT =
  "M20 21c-1.390 0-2.780-.47-4-1.320-2.440 1.710-5.560 1.710-8 0C6.780 20.530 5.390 21 4 21H2v2h2c1.380 0 2.740-.35 4-.99 2.520 1.290 5.480 1.290 8 0 1.260.65 2.620.99 4 .99h2v-2h-2zM3.950 19H4c1.600 0 3.020-.88 4-2 .98 1.120 2.400 2 4 2s3.020-.88 4-2c.98 1.120 2.400 2 4 2h.05l1.890-6.680c.08-.26.06-.54-.06-.78s-.34-.42-.6-.5L20 10.620V6c0-1.100-.9-2-2-2h-3V1H9v3H6c-1.100 0-2 .9-2 2v4.620l-1.290.42c-.26.08-.48.26-.6.5s-.15.52-.06.78L3.950 19zM6 6h12v3.970L12 8 6 9.970V6z";
const BoatIcon = ({ className = "size-[26px]", color = TEAL }: { className?: string; color?: string }) => (
  <Svg className={className}><path d={BOAT} fill={color} /></Svg>
);
const PencilIcon = ({ className = "size-6", color = TEAL }: { className?: string; color?: string }) => (
  <Svg className={className}>
    <path d="M1 23l1.800-6.300L18.500 1 23 5.500 7.300 21.200zM2.800 16.700l4.500 4.500M16 3.500L20.500 8M1.300 20.600l2.100 2.100" stroke={color} strokeWidth="1.500" strokeLinejoin="round" />
  </Svg>
);
const FolderTealIcon = () => (
  <Svg><path d="M.6 20V4h8.500l1.500 2.300h10.900v3" stroke={TEAL} fill="#fff" /><path d="M.6 20.500L5 9h19l-3.500 11.500z" fill={TEAL} /></Svg>
);
const GearIcon = () => (
  <Svg>
    <path d="M12 0v24M0 12h24M3.600 3.600l16.800 16.800M20.400 3.600L3.600 20.400" stroke={TEAL} strokeWidth="5" />
    <circle cx="12" cy="12" r="9" fill={TEAL} /><circle cx="12" cy="12" r="4.500" fill="#f3f3f3" />
  </Svg>
);
const HelpIcon = () => (
  <Svg><path d="M7 6.500C8 .5 17 .5 17 6.500c0 4-5 4.500-5 10" stroke={TEAL} strokeWidth="3" /><circle cx="12" cy="21" r="2" fill={TEAL} /></Svg>
);
const ExportIcon = () => (
  <Svg>
    <path d="M.6 20V4h8.500l1.500 2.300h10.900v3" stroke={TEAL} fill="#fff" /><path d="M.6 20.500L4 8h20l-3.500 12.500z" fill={TEAL} />
    <path d="M13 11.500V10H7v9h6v-1.500M10 14.500h9M16.500 11.500l3 3-3 3" stroke="#fff" strokeWidth="1.400" />
  </Svg>
);
const MergeIcon = () => (
  <Svg><path d="M0 5.500h4.500c4 0 4.500 6 9 6H22M0 18h4.500c4 0 4.500-6 9-6M17.500 6.500l5 5.300-5 5.300" stroke={TEAL} strokeWidth="3" /></Svg>
);
const BinocularsIcon = () => (
  <Svg>
    <path d="M4.500 3.500h4.500l1 3h4l1-3h4.500l1.500 6L24 18H0l3-8.500z" fill={TEAL} />
    <circle cx="4.800" cy="17.500" r="4.100" fill="#f3f3f3" stroke={TEAL} strokeWidth="1.300" /><circle cx="19.200" cy="17.500" r="4.100" fill="#f3f3f3" stroke={TEAL} strokeWidth="1.300" />
    <rect x="10" y="15.500" width="4" height="8" fill="#f3f3f3" />
  </Svg>
);
const BirdIcon = () => (
  <Svg>
    <path d="M22.500.5c-3.500.5-8 4-9.500 7.500-4 .5-9-.5-13 3 3 .3 6.500 1.200 8 2C8 17.500 4 20.500 1.500 23.500c3.500-.8 6-2 8-4.500-.5 1.500-1 3-1.500 4.500 5-3 8-6.500 9-10.500 2.500.5 4.500-.5 7-.2-1-1.500-3.500-3.300-6-3.500C17.500 6 19 3 22.500.5z" fill={TEAL} />
  </Svg>
);

/* ------------------------------------------------------------------ */
/* Chrome pieces                                                       */
/* ------------------------------------------------------------------ */

const Cell = ({ children }: { children: React.ReactNode }) => <div className="flex w-[33px] shrink-0 items-center justify-center">{children}</div>;
const Caret = ({ className = "w-[14px]" }: { className?: string }) => (
  <div className={`flex shrink-0 items-center justify-center ${className}`}>
    <div className="h-0 w-0 border-x-4 border-t-4 border-x-transparent border-t-[#5a5a5a]" />
  </div>
);
const Grip = ({ className = "w-[12px]" }: { className?: string }) => (
  <div className={`flex shrink-0 justify-center ${className}`}>
    <svg width="5" height="17" className="block">
      {[0, 4, 8, 12, 16].map((y) => (
        <g key={y} fill="#b5b5b5"><rect x="0" y={y} width="1" height="1" /><rect x="3" y={y} width="1" height="1" /></g>
      ))}
    </svg>
  </div>
);
const Separator = ({ className }: { className: string }) => (
  <div className={`flex shrink-0 justify-center ${className}`}><div className="h-[28px] w-px bg-[#d2d2d2]" /></div>
);
const SplitDots = () => (
  <svg width="17" height="1" className="ml-[3px] block">
    {[0, 3, 6, 9, 12, 15].map((x) => <rect key={x} x={x} width="1" height="1" fill="#a8a8a8" />)}
  </svg>
);
const DockButtons = () => (
  <div className="flex gap-[3px]">
    <svg width="11" height="11" viewBox="0 0 11 11" fill="none" stroke="#6a6a6a" className="block">
      <rect x=".5" y=".5" width="10" height="10" rx="2" /><rect x="4.500" y="2.500" width="4" height="4" /><rect x="2.500" y="4.500" width="4" height="4" fill="#efefef" />
    </svg>
    <svg width="11" height="11" viewBox="0 0 11 11" fill="none" stroke="#6a6a6a" className="block">
      <rect x=".5" y=".5" width="10" height="10" rx="2" /><path d="M3 3l5 5M8 3L3 8" strokeWidth="1.900" stroke="#555" />
    </svg>
  </div>
);

const MENU: [string, string, string, number][] = [
  ["Pro", "j", "ect", 62.6], ["", "E", "dit", 41.2], ["", "V", "iew", 47.5], ["", "L", "ayer", 51.4], ["", "S", "ettings", 70.2],
  ["", "P", "lugins", 63], ["Vect", "o", "r", 59.2], ["", "R", "aster", 57.6], ["", "D", "atabase", 78.1], ["", "W", "eb", 45.2],
  ["", "M", "esh", 51.3], ["Pro", "c", "essing", 86.4], ["", "H", "elp", 40],
];

type Col = { name: string; w: number; sorted?: boolean };
const ENV: Col[] = [
  { name: "fid", w: 57 }, { name: "survey", w: 74 }, { name: "cycle", w: 63, sorted: true }, { name: "session", w: 79 }, { name: "shipName", w: 97 },
  { name: "computer", w: 96 }, { name: "left", w: 57 }, { name: "right", w: 63 }, { name: "dateTime", w: 95 }, { name: "plateform", w: 98 },
  { name: "transect", w: 87 }, { name: "routeType", w: 100 }, { name: "speed", w: 70 }, { name: "courseAverage", w: 132 }, { name: "seaState", w: 89 },
  { name: "windDir", w: 83 }, { name: "windForce", w: 100 }, { name: "swellDir", w: 86 }, { name: "swellHeight", w: 113 }, { name: "glareFrom", w: 100 },
  { name: "glareTo", w: 81 }, { name: "", w: 10 },
];
const SIGHT: Col[] = [
  { name: "fid", w: 57, sorted: true }, { name: "dateTime", w: 95 }, { name: "observer", w: 91 }, { name: "side", w: 57 }, { name: "species", w: 79 },
  { name: "podSize", w: 83 }, { name: "min", w: 57 }, { name: "max", w: 57 }, { name: "age", w: 57 }, { name: "distance", w: 87 },
  { name: "angle", w: 66 }, { name: "direction", w: 91 }, { name: "behaviour", w: 99 }, { name: "behavSpecies", w: 854 },
];

function Header({ cols }: { cols: Col[] }) {
  return (
    <div className="flex h-[21px] shrink-0 overflow-hidden border-b border-[#a9a9a9] bg-gradient-to-b from-[#fbfbfb] to-[#e9e9e9]">
      {cols.map((c, i) => (
        <div key={i} className="relative flex shrink-0 items-center justify-center border-r border-[#cfcfcf] text-[14px] leading-none last:border-r-0" style={{ width: c.w }}>
          <span className={c.sorted ? "pr-[14px]" : ""}>{c.name}</span>
          {c.sorted && <i className="absolute top-[7px] right-[4px] border-x-4 border-b-4 border-x-transparent border-b-[#444]" />}
        </div>
      ))}
    </div>
  );
}

const Steps = () => (
  <div className="flex h-full w-[13px] flex-col items-center justify-center gap-[5px] border-l border-[#c0c0c0]">
    <i className="border-x-4 border-b-4 border-x-transparent border-b-[#555]" />
    <i className="border-x-4 border-t-4 border-x-transparent border-t-[#555]" />
  </div>
);

export default function App() {
  return (
    <div className="flex h-[1053px] w-[1850px] flex-col overflow-hidden bg-[#efefef] font-['Noto_Sans',sans-serif] text-[14px] leading-none text-[#1c1c1c]">
      {/* Title bar */}
      <div className="flex h-[37px] shrink-0 items-center border-b border-[#b9b9b9] bg-[#ebebeb]">
        <div className="w-[97px]" />
        <div className="flex-1 text-center text-[14px] font-semibold text-[#3c3c3c]">*project — QGIS [sammo-boat]</div>
        <div className="flex w-[97px] gap-3">
          {[0, 1, 2].map((i) => (
            <svg key={i} width="22" height="22" viewBox="0 0 22 22" fill="none" className="block">
              <circle cx="11" cy="11" r="11" fill="#dadada" />
              {i === 0 && <path d="M7 13.500h8" stroke="#333" />}
              {i === 1 && <><path d="M7.500 9.500h5v5h-5z" stroke="#333" /><path d="M9 7.500h5.500V13" stroke="#888" /></>}
              {i === 2 && <path d="M7.500 7.500l7 7M14.500 7.500l-7 7" stroke="#3c3c3c" strokeWidth="1.600" />}
            </svg>
          ))}
        </div>
      </div>

      {/* Menu bar */}
      <div className="flex h-[22px] shrink-0 items-center border-b border-[#d0d0d0] pl-[10.700px]">
        {MENU.map(([a, u, b, w]) => (
          <div key={a + u + b} className="shrink-0 whitespace-nowrap text-black" style={{ width: w }}>
            {a}<span className="border-b border-black">{u}</span>{b}
          </div>
        ))}
      </div>

      {/* Main toolbar */}
      <div className="flex h-[39px] shrink-0 items-center border-b border-[#b5b5b5] bg-gradient-to-b from-[#fafafa] to-[#ececec]">
        <Grip />
        <Cell><NewIcon /></Cell><Cell><OpenIcon /></Cell><Cell><SaveIcon /></Cell><Cell><LayoutIcon /></Cell><Cell><LayoutManagerIcon /></Cell><Cell><StyleIcon /></Cell>
        <Grip className="w-[17px] pl-[4px]" />
        <div className="flex h-8 w-8 shrink-0 items-center justify-center rounded-[3px] border border-[#a9a9a9] bg-[#dcdcdc]"><HandIcon /></div>
        <Cell><PanToIcon /></Cell><Cell><ZoomInIcon /></Cell><Cell><ZoomOutIcon /></Cell><Cell><ZoomFullIcon /></Cell><Cell><ZoomSelectionIcon /></Cell>
        <Cell><ZoomLayerIcon /></Cell><Cell><ZoomNativeIcon /></Cell><Cell><ZoomStepIcon /></Cell><Cell><ZoomStepIcon next /></Cell><Cell><MapViewIcon /></Cell>
        <Cell><View3DIcon /></Cell><Cell><NewBookmarkIcon /></Cell><Cell><BookmarksIcon /></Cell><Cell><ClockIcon /></Cell><Cell><RefreshIcon /></Cell>
        <Grip className="w-[16px] pl-[6px]" />
        <Cell><SelectIcon /></Cell><Caret className="w-[12px]" /><Cell><SelectValueIcon /></Cell><Caret className="w-[12px]" /><Cell><DeselectIcon /></Cell><Caret className="w-[12px]" />
        <Cell><LocationIcon /></Cell>
        <Grip className="w-[17px] pl-[4px]" />
        <Cell><PythonIcon /></Cell><Cell><UndoIcon /></Cell><Caret className="w-[10px]" />
      </div>

      {/* Sammo toolbar */}
      <div className="flex h-[38px] shrink-0 items-center border-b border-[#b5b5b5] bg-gradient-to-b from-[#fafafa] to-[#ececec]">
        <Grip />
        <Cell><FolderTealIcon /></Cell><Cell><GearIcon /></Cell><Cell><HelpIcon /></Cell>
        <Separator className="w-[7px]" />
        <Cell><PencilIcon /></Cell><Caret className="w-[12px]" /><Cell><ExportIcon /></Cell><Cell><MergeIcon /></Cell>
        <Separator className="w-[7px]" />
        <Cell><BoatIcon /></Cell><Cell><BinocularsIcon /></Cell><Cell><BirdIcon /></Cell><Caret className="w-[12px]" />
      </div>

      {/* Dock and map */}
      <div className="flex h-[478px] shrink-0">
        <div className="flex w-[342px] flex-col">
          <div className="flex h-[20px] shrink-0 items-center justify-between pt-px pr-[2px] pl-1"><span>Sammo Status</span><DockButtons /></div>
          <div className="flex h-[382px] shrink-0 bg-[#f2bac4]">
            <div className="flex w-[169px] items-center justify-center rounded-[3px] border border-[#b88089] bg-gradient-to-b from-[#fff8f9] to-[#eec3cc]">
              <svg width="48" height="68" viewBox="0 0 48 68" className="block" fill="#c96171">
                <path fillRule="evenodd" d="M6 0h36a6 6 0 0 1 6 6v56a6 6 0 0 1-6 6H6a6 6 0 0 1-6-6V6a6 6 0 0 1 6-6zM4.500 4.500v47.500h39V4.500zM19 57.500a2 2 0 0 0 0 4h10a2 2 0 0 0 0-4z" />
                <path fillRule="evenodd" d="M24 45C20 37 11.500 31 11.500 23a12.500 12.500 0 0 1 25 0C36.500 31 28 37 24 45zM24 18.500a5 5 0 1 0 0 10 5 5 0 0 0 0-10z" />
              </svg>
            </div>
            <div className="grid grid-cols-[72px_auto] content-center pl-[5px] text-[12.500px] leading-[16px] font-bold tracking-[-0.15px] text-[#8a8a8a]">
              <span>latitude</span><span>0.0</span><span>longitude</span><span>0.0</span><span>speed</span><span /><span>course</span><span />
            </div>
          </div>
          <div className="mt-[6px] flex h-[70px] gap-[6px]">
            <div className="flex w-[110px] items-center justify-center bg-[#d1f1c4]"><PencilIcon className="size-[44px]" color="#8ec57b" /></div>
            <div className="flex w-[110px] items-center justify-center bg-[#f2bac4]"><BoatIcon className="size-[42px]" color="#c96171" /></div>
            <div className="flex w-[110px] items-center justify-center rounded-[3px] border border-[#c08b95] bg-gradient-to-b from-[#fff8f9] to-[#eec3cc]">
              <svg width="24" height="40" viewBox="0 0 24 40" className="block" fill="none">
                <rect x="5.500" width="13" height="26" rx="6.500" fill="#dccace" /><path d="M1 18v3a11 10.500 0 0 0 22 0v-3M12 31v7M5.500 38.800h13" stroke="#dfbec5" strokeWidth="2.200" />
              </svg>
            </div>
          </div>
        </div>
        <div className="flex w-[6px] items-center justify-center">
          <svg width="1" height="17" className="block">{[0, 3, 6, 9, 12, 15].map((y) => <rect key={y} y={y} width="1" height="1" fill="#a8a8a8" />)}</svg>
        </div>
        <div className="mt-px flex-1 border-t border-b border-l border-[#b5b5b5] bg-[#a6cee3]"><WorldMap /></div>
      </div>

      {/* Environment dock */}
      <div className="flex h-[5px] shrink-0 items-center justify-center"><SplitDots /></div>
      <div className="flex h-[20px] shrink-0 items-center justify-between pr-[2px] pl-1"><span>Environment</span><DockButtons /></div>
      <div className="mx-[9px] mt-[13px] flex h-[154px] shrink-0 flex-col border border-[#b5b5b5] bg-white">
        <Header cols={ENV} />
        <div className="flex-1" />
        <div className="flex h-[15px] shrink-0 border-t border-[#b9b9b9] bg-[#e3e3e3]">
          <div className="flex w-[14px] items-center justify-center border-r border-[#c4c4c4] bg-[#f4f4f4]"><i className="mr-[2px] border-y-4 border-r-4 border-y-transparent border-r-[#444]" /></div>
          <div className="w-[1491px] border-r border-[#b5b5b5] bg-gradient-to-b from-[#fcfcfc] to-[#ededed]" />
          <div className="flex-1" />
          <div className="flex w-[14px] items-center justify-center border-l border-[#c4c4c4] bg-[#f4f4f4]"><i className="mr-[2px] border-y-4 border-l-4 border-y-transparent border-l-[#444]" /></div>
        </div>
      </div>

      {/* Sightings dock */}
      <div className="mt-[13px] flex h-[5px] shrink-0 items-center justify-center"><SplitDots /></div>
      <div className="mt-[6px] flex h-[24px] shrink-0 items-center pl-[9px]">Sightings</div>
      <div className="mx-[9px] mt-[7px] flex h-[146px] shrink-0 flex-col border border-[#b5b5b5] bg-white"><Header cols={SIGHT} /></div>

      {/* Status bar */}
      <div className="mt-[18px] flex h-[25px] shrink-0 items-center text-[12px]">
        <div className="ml-1 flex h-[25px] w-[268px] shrink-0 items-center rounded-[3px] border border-[#b0b0b0] bg-white text-[14px] text-[#8b8b8b]">
          <svg width="13" height="13" viewBox="0 0 13 13" fill="none" className="mr-[7px] ml-[8px] block" stroke="#8a8a8a" strokeWidth="1.400"><circle cx="5" cy="5" r="4" /><path d="M8 8l4.500 4.500" /></svg>
          Type to locate (Ctrl+K)
        </div>
        <span className="ml-[731px] w-[64px] shrink-0">Coordinate</span>
        <div className="flex h-[23px] w-[77px] shrink-0 items-center justify-center rounded-[3px] border border-[#b0b0b0] bg-white">-76° 96,4°</div>
        <svg width="18" height="18" viewBox="0 0 18 18" fill="none" className="mr-[13px] ml-[3px] block shrink-0" stroke="#333">
          <path d="M4 6l6-4 4 8-1 5-4 1-4-4z" fill="#ddd" />
          <path d="M3 3l6 10M6 2l5 9M3 7l3 5c1 3 3 4 5 4 3 0 4-3 3-6M9 2l4 7M13 5l2-3M15 7l3-2" strokeWidth="1.300" />
          <circle cx="10" cy="12" r="1.800" fill="#fff" />
        </svg>
        <span className="w-[31px] shrink-0">Scale</span>
        <div className="flex h-[25px] w-[97px] shrink-0 items-center rounded-[3px] border border-[#b0b0b0] bg-white">
          <span className="flex-1 pl-px tracking-[-0.25px]">1:147384352</span>
          <div className="flex h-full w-[20px] items-center justify-center rounded-r-[3px] border-l border-[#c0c0c0] bg-gradient-to-b from-[#fbfbfb] to-[#ebebeb]"><Caret /></div>
        </div>
        <svg width="12" height="16" viewBox="0 0 12 16" fill="none" className="mr-[9px] ml-[12px] block shrink-0"><path d="M3 8V4.500a3 3 0 0 1 6 0V8" stroke="#8a8a8a" strokeWidth="1.800" /><rect x="0" y="7" width="12" height="9" rx="1.500" fill="#565656" /></svg>
        <span className="w-[55px] shrink-0 tracking-[-0.2px]">Magnifier</span>
        <div className="flex h-[24px] w-[94px] shrink-0 items-center rounded-[3px] border border-[#b0b0b0] bg-white"><span className="flex-1 pl-[4px]">100%</span><Steps /></div>
        <span className="ml-[8px] w-[57px] shrink-0">Rotation</span>
        <div className="flex h-[24px] w-[93px] shrink-0 items-center rounded-[3px] border border-[#b0b0b0] bg-white"><span className="flex-1 pl-[4px]">0,0 °</span><Steps /></div>
        <svg width="14" height="14" viewBox="0 0 14 14" fill="none" className="mr-[5px] ml-[7px] block shrink-0"><rect x=".5" y=".5" width="13" height="13" fill="#fff" stroke="#b0b0b0" /><path d="M3.500 6l2.800 4.500L10.500 2.500" stroke="#111" strokeWidth="1.800" /></svg>
        <span className="w-[54px] shrink-0">Render</span>
        <svg width="16" height="15" viewBox="0 0 16 15" fill="none" className="mr-[2px] block shrink-0"><ellipse cx="8" cy="7.500" rx="7.700" ry="7" fill="#777" /><path d="M1 7.500h14M8 1v13M2.500 4h11M2.500 11h11" stroke="#ccc" strokeWidth=".8" /><ellipse cx="8" cy="7.500" rx="3.500" ry="6.800" stroke="#ccc" strokeWidth=".8" /></svg>
        <span className="w-[82px] shrink-0 tracking-[-0.2px]">EPSG:4326</span>
        <svg width="16" height="16" viewBox="0 0 16 16" className="block shrink-0" fill="#555"><path d="M8 1c4 0 7.500 2.500 7.500 6.200 0 2-.8 3.500-1.800 4.500l.6 3.800-3.500-2.500C6 14 .5 12 .5 7.200.5 3.500 4 1 8 1z" /><circle cx="4.500" cy="7" r="1.100" fill="#eee" /><circle cx="8" cy="7" r="1.100" fill="#eee" /><circle cx="11.500" cy="7" r="1.100" fill="#eee" /></svg>
      </div>
    </div>
  );
}
